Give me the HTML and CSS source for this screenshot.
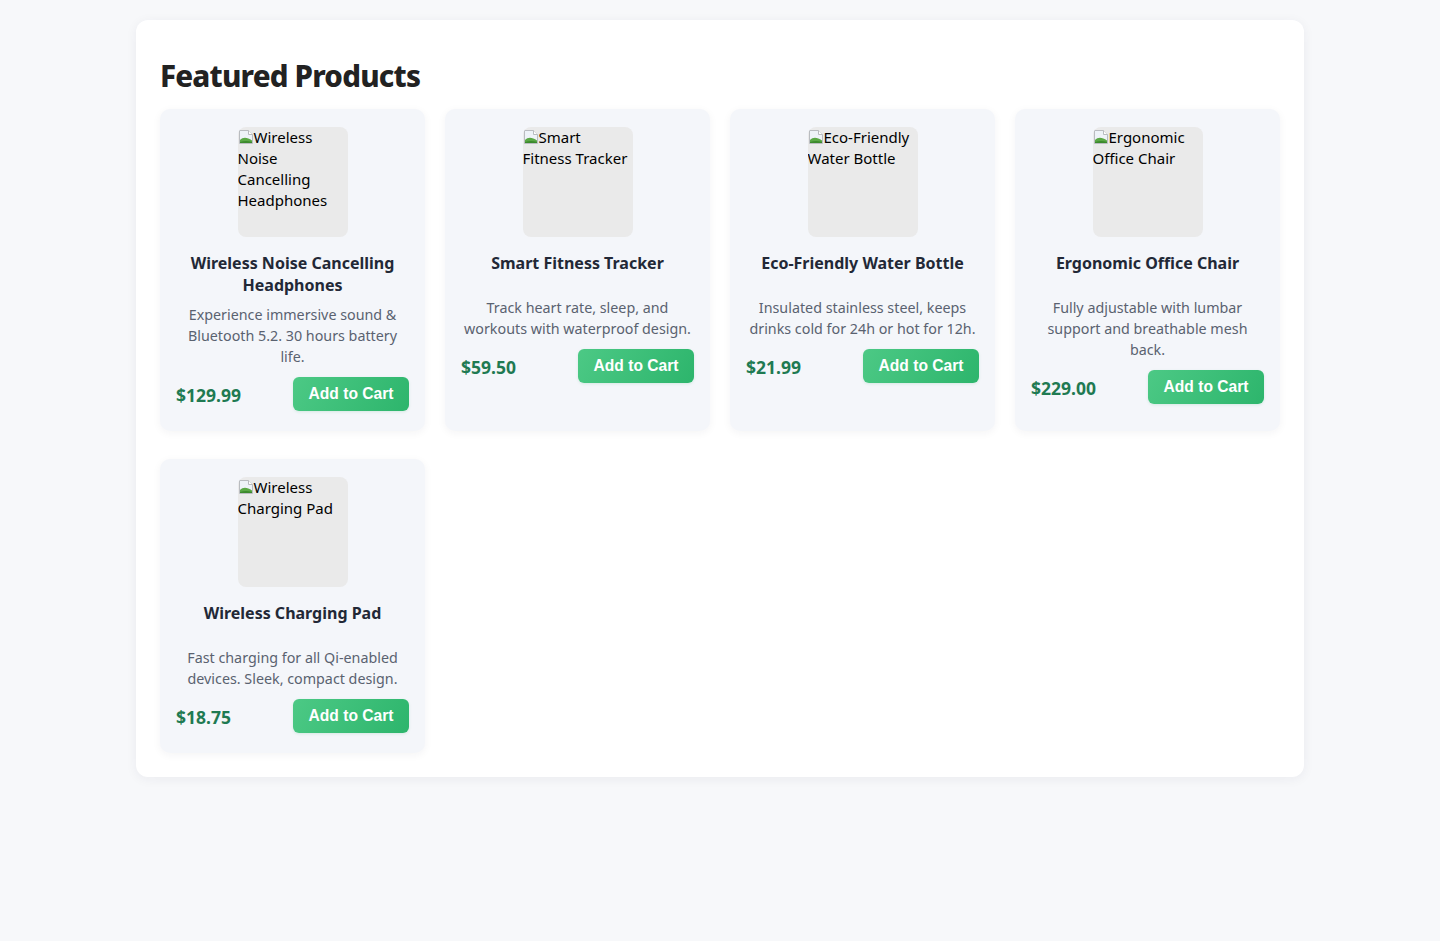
FILE: index.html
```html
<!DOCTYPE html>
<html lang="en">
<head>
<meta charset="utf-8">
<title>Featured Products</title>
<link rel="stylesheet" href="styles.css">
</head>
<body>
<main class="panel">
  <h1 class="heading">Featured Products</h1>
  <div class="grid">
    <article class="card">
      <div class="thumb"><svg class="broken" viewBox="0 0 16 16" width="16" height="16"><path d="M1.5 1.5h9l4 4v9h-13z" fill="#eef3f8" stroke="#b9bcc0"/><path d="M10.5 1.5v4h4" fill="#fff" stroke="#b9bcc0"/><path d="M2 11c3-3 7-3 12 0.5V14H2z" fill="#5aa845"/><path d="M2 13c4-1.5 8-1.5 12 0V14H2z" fill="#3b8a2c"/></svg>Wireless Noise Cancelling Headphones</div>
      <h2 class="title">Wireless Noise Cancelling Headphones</h2>
      <p class="desc">Experience immersive sound &amp; Bluetooth 5.2. 30 hours battery life.</p>
      <div class="foot"><span class="price">$129.99</span><button class="btn">Add to Cart</button></div>
    </article>
    <article class="card">
      <div class="thumb"><svg class="broken" viewBox="0 0 16 16" width="16" height="16"><path d="M1.5 1.5h9l4 4v9h-13z" fill="#eef3f8" stroke="#b9bcc0"/><path d="M10.5 1.5v4h4" fill="#fff" stroke="#b9bcc0"/><path d="M2 11c3-3 7-3 12 0.5V14H2z" fill="#5aa845"/><path d="M2 13c4-1.5 8-1.5 12 0V14H2z" fill="#3b8a2c"/></svg>Smart Fitness Tracker</div>
      <h2 class="title">Smart Fitness Tracker</h2>
      <p class="desc">Track heart rate, sleep, and workouts with waterproof design.</p>
      <div class="foot"><span class="price">$59.50</span><button class="btn">Add to Cart</button></div>
    </article>
    <article class="card">
      <div class="thumb"><svg class="broken" viewBox="0 0 16 16" width="16" height="16"><path d="M1.5 1.5h9l4 4v9h-13z" fill="#eef3f8" stroke="#b9bcc0"/><path d="M10.5 1.5v4h4" fill="#fff" stroke="#b9bcc0"/><path d="M2 11c3-3 7-3 12 0.5V14H2z" fill="#5aa845"/><path d="M2 13c4-1.5 8-1.5 12 0V14H2z" fill="#3b8a2c"/></svg>Eco-Friendly Water Bottle</div>
      <h2 class="title">Eco-Friendly Water Bottle</h2>
      <p class="desc">Insulated stainless steel, keeps drinks cold for 24h or hot for 12h.</p>
      <div class="foot"><span class="price">$21.99</span><button class="btn">Add to Cart</button></div>
    </article>
    <article class="card">
      <div class="thumb"><svg class="broken" viewBox="0 0 16 16" width="16" height="16"><path d="M1.5 1.5h9l4 4v9h-13z" fill="#eef3f8" stroke="#b9bcc0"/><path d="M10.5 1.5v4h4" fill="#fff" stroke="#b9bcc0"/><path d="M2 11c3-3 7-3 12 0.5V14H2z" fill="#5aa845"/><path d="M2 13c4-1.5 8-1.5 12 0V14H2z" fill="#3b8a2c"/></svg>Ergonomic Office Chair</div>
      <h2 class="title">Ergonomic Office Chair</h2>
      <p class="desc">Fully adjustable with lumbar support and breathable mesh back.</p>
      <div class="foot"><span class="price">$229.00</span><button class="btn">Add to Cart</button></div>
    </article>
    <article class="card">
      <div class="thumb"><svg class="broken" viewBox="0 0 16 16" width="16" height="16"><path d="M1.5 1.5h9l4 4v9h-13z" fill="#eef3f8" stroke="#b9bcc0"/><path d="M10.5 1.5v4h4" fill="#fff" stroke="#b9bcc0"/><path d="M2 11c3-3 7-3 12 0.5V14H2z" fill="#5aa845"/><path d="M2 13c4-1.5 8-1.5 12 0V14H2z" fill="#3b8a2c"/></svg>Wireless Charging Pad</div>
      <h2 class="title">Wireless Charging Pad</h2>
      <p class="desc">Fast charging for all Qi-enabled devices. Sleek, compact design.</p>
      <div class="foot"><span class="price">$18.75</span><button class="btn">Add to Cart</button></div>
    </article>
  </div>
</main>
</body>
</html>
```

FILE: styles.css
```css
html, body {
  margin: 0;
  padding: 0;
}
body {
  background: #f7f8fa;
  font-family: "Noto Sans", "Open Sans", sans-serif;
  font-size: 14px;
  color: #222;
  padding-top: 20px;
  min-height: 941px;
  box-sizing: border-box;
}
.panel {
  width: 1168px;
  box-sizing: border-box;
  margin: 0 auto;
  background: #fff;
  border-radius: 12px;
  padding: 24px;
  box-shadow: 0 2px 12px rgba(30, 40, 60, 0.06);
}
.heading {
  margin: 11px 0 13px;
  font-size: 29.5px;
  line-height: 41px;
  font-weight: 800;
  letter-spacing: -0.8px;
  color: #222;
}
.grid {
  display: grid;
  grid-template-columns: repeat(4, 1fr);
  column-gap: 20px;
  row-gap: 28px;
}
.card {
  background: #f4f6fa;
  border-radius: 10px;
  padding: 18px 16px 20px;
  display: flex;
  flex-direction: column;
  align-items: center;
  text-align: center;
  box-shadow: 0 2px 8px rgba(30, 40, 60, 0.05);
}
.thumb {
  width: 110px;
  height: 110px;
  background: #eaeaea;
  border-radius: 8px;
  text-align: left;
  font-size: 15px;
  line-height: 21px;
  color: #000;
  overflow: hidden;
}
.broken {
  vertical-align: -2px;
}
.title {
  margin: 15px 0 8px;
  min-height: 36.5px;
  font-size: 16px;
  line-height: 22px;
  font-weight: 700;
  color: #222836;
}
.desc {
  margin: 0 0 10px;
  font-size: 14.3px;
  line-height: 21px;
  color: #5a6270;
}
.foot {
  width: 100%;
  display: flex;
  justify-content: space-between;
  align-items: center;
}
.price {
  font-size: 17.5px;
  font-weight: 700;
  color: #1f7a52;
  padding-top: 2px;
}
.btn {
  border: 0;
  border-radius: 6px;
  background: linear-gradient(120deg, #4cc985, #2db56c);
  color: #fff;
  font-family: "Liberation Sans", Arial, sans-serif;
  font-weight: 700;
  font-size: 15.6px;
  line-height: 18px;
  padding: 8px 0;
  width: 116px;
  height: 34px;
  box-shadow: 0 1px 3px rgba(40, 160, 100, 0.15);
}
```
